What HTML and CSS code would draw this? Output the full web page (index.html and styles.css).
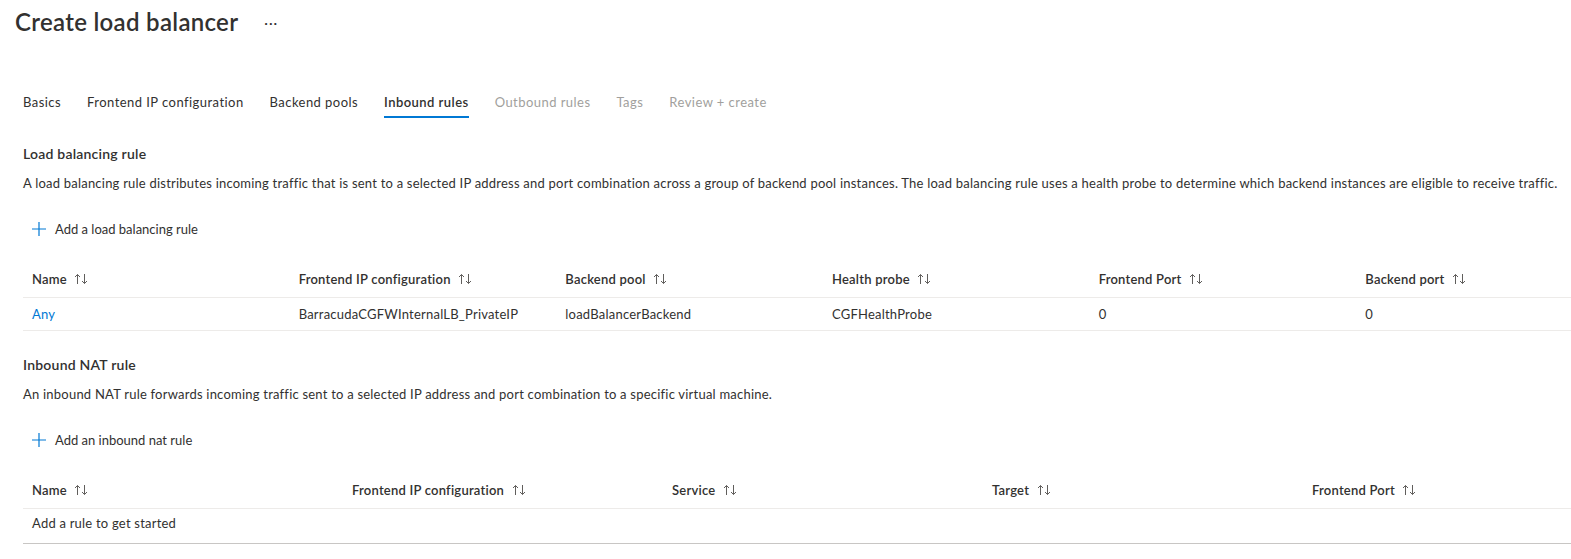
FILE: index.html
```html
<!DOCTYPE html>
<html lang="en">
<head>
  <meta charset="UTF-8">
  <title>Create load balancer</title>
  <link rel="stylesheet" href="styles.css">
</head>
<body>
  <div class="page">
    <div class="title-bar">
      <h1>Create load balancer</h1>
      <span class="more">&middot;&middot;&middot;</span>
    </div>

    <nav class="tabs">
      <a class="tab">Basics</a>
      <a class="tab">Frontend IP configuration</a>
      <a class="tab">Backend pools</a>
      <a class="tab active">Inbound rules</a>
      <a class="tab disabled">Outbound rules</a>
      <a class="tab disabled">Tags</a>
      <a class="tab disabled">Review + create</a>
    </nav>

    <section class="section first">
      <h2>Load balancing rule</h2>
      <p class="desc">A load balancing rule distributes incoming traffic that is sent to a selected IP address and port combination across a group of backend pool instances. The load balancing rule uses a health probe to determine which backend instances are eligible to receive traffic.</p>
      <button class="add">
        <svg width="16" height="16" viewBox="0 0 16 16"><path d="M8 1v14M1 8h14" stroke="#0078d4" stroke-width="1.2" fill="none"/></svg>
        Add a load balancing rule
      </button>
      <table class="grid six">
        <thead>
          <tr>
            <th>Name <svg class="sort" width="14" height="12" viewBox="0 0 14 12"><path d="M3.5 11V1.5M1 4l2.5-2.5L6 4M10.5 1v9.5M8 8l2.5 2.5L13 8" stroke="#605e5c" stroke-width="1" fill="none"/></svg></th>
            <th>Frontend IP configuration <svg class="sort" width="14" height="12" viewBox="0 0 14 12"><path d="M3.5 11V1.5M1 4l2.5-2.5L6 4M10.5 1v9.5M8 8l2.5 2.5L13 8" stroke="#605e5c" stroke-width="1" fill="none"/></svg></th>
            <th>Backend pool <svg class="sort" width="14" height="12" viewBox="0 0 14 12"><path d="M3.5 11V1.5M1 4l2.5-2.5L6 4M10.5 1v9.5M8 8l2.5 2.5L13 8" stroke="#605e5c" stroke-width="1" fill="none"/></svg></th>
            <th>Health probe <svg class="sort" width="14" height="12" viewBox="0 0 14 12"><path d="M3.5 11V1.5M1 4l2.5-2.5L6 4M10.5 1v9.5M8 8l2.5 2.5L13 8" stroke="#605e5c" stroke-width="1" fill="none"/></svg></th>
            <th>Frontend Port <svg class="sort" width="14" height="12" viewBox="0 0 14 12"><path d="M3.5 11V1.5M1 4l2.5-2.5L6 4M10.5 1v9.5M8 8l2.5 2.5L13 8" stroke="#605e5c" stroke-width="1" fill="none"/></svg></th>
            <th>Backend port <svg class="sort" width="14" height="12" viewBox="0 0 14 12"><path d="M3.5 11V1.5M1 4l2.5-2.5L6 4M10.5 1v9.5M8 8l2.5 2.5L13 8" stroke="#605e5c" stroke-width="1" fill="none"/></svg></th>
          </tr>
        </thead>
        <tbody>
          <tr>
            <td><a class="link">Any</a></td>
            <td>BarracudaCGFWInternalLB_PrivateIP</td>
            <td>loadBalancerBackend</td>
            <td>CGFHealthProbe</td>
            <td>0</td>
            <td>0</td>
          </tr>
        </tbody>
      </table>
    </section>

    <section class="section">
      <h2>Inbound NAT rule</h2>
      <p class="desc">An inbound NAT rule forwards incoming traffic sent to a selected IP address and port combination to a specific virtual machine.</p>
      <button class="add">
        <svg width="16" height="16" viewBox="0 0 16 16"><path d="M8 1v14M1 8h14" stroke="#0078d4" stroke-width="1.2" fill="none"/></svg>
        Add an inbound nat rule
      </button>
      <table class="grid five">
        <thead>
          <tr>
            <th>Name <svg class="sort" width="14" height="12" viewBox="0 0 14 12"><path d="M3.5 11V1.5M1 4l2.5-2.5L6 4M10.5 1v9.5M8 8l2.5 2.5L13 8" stroke="#605e5c" stroke-width="1" fill="none"/></svg></th>
            <th>Frontend IP configuration <svg class="sort" width="14" height="12" viewBox="0 0 14 12"><path d="M3.5 11V1.5M1 4l2.5-2.5L6 4M10.5 1v9.5M8 8l2.5 2.5L13 8" stroke="#605e5c" stroke-width="1" fill="none"/></svg></th>
            <th>Service <svg class="sort" width="14" height="12" viewBox="0 0 14 12"><path d="M3.5 11V1.5M1 4l2.5-2.5L6 4M10.5 1v9.5M8 8l2.5 2.5L13 8" stroke="#605e5c" stroke-width="1" fill="none"/></svg></th>
            <th>Target <svg class="sort" width="14" height="12" viewBox="0 0 14 12"><path d="M3.5 11V1.5M1 4l2.5-2.5L6 4M10.5 1v9.5M8 8l2.5 2.5L13 8" stroke="#605e5c" stroke-width="1" fill="none"/></svg></th>
            <th>Frontend Port <svg class="sort" width="14" height="12" viewBox="0 0 14 12"><path d="M3.5 11V1.5M1 4l2.5-2.5L6 4M10.5 1v9.5M8 8l2.5 2.5L13 8" stroke="#605e5c" stroke-width="1" fill="none"/></svg></th>
          </tr>
        </thead>
        <tbody>
          <tr class="empty">
            <td colspan="5">Add a rule to get started</td>
          </tr>
        </tbody>
      </table>
    </section>
  </div>
</body>
</html>
```

FILE: styles.css
```css
html, body { margin: 0; overflow: hidden; }
body {
  font-family: Lato, "Noto Sans", sans-serif;
  color: #323130;
  background: #fff;
  font-size: 13px;
  letter-spacing: 0.22px;
}
.page { width: 1640px; }

.title-bar { display: flex; align-items: center; padding: 6px 0 0 15px; height: 32px; }
h1 { margin: 0; font-size: 24px; font-weight: 600; line-height: 32px; letter-spacing: 0.3px; }
.more { margin-left: 26px; font-size: 14px; color: #323130; letter-spacing: 1px; }

.tabs { display: flex; gap: 26px; margin: 46px 0 0 23px; }
.tab { padding: 8px 0 4px; line-height: 20px; font-size: 13px; border-bottom: 2px solid transparent; letter-spacing: 0.45px; }
.tab.active { font-weight: 600; border-bottom-color: #0078d4; }
.tab.disabled { color: #a19f9d; }

.section { padding-left: 23px; }
h2 { margin: 24px 0 0; font-size: 14px; font-weight: 600; line-height: 20px; }
.first h2 { margin-top: 26px; }
.desc { margin: 10px 0 0; line-height: 18px; }

.add {
  display: flex; align-items: center; gap: 8px;
  height: 36px; margin-top: 19px; padding: 0 0 0 8px;
  border: none; background: none; font: inherit; color: #323130;
}

.grid { border-collapse: collapse; margin-top: 14px; table-layout: fixed; width: 1600px; }
.grid th {
  text-align: left; font-weight: 600; height: 36px; padding: 0 9px;
  border-bottom: 1px solid #edebe9;
}
.grid td { height: 32px; padding: 0 9px; border-bottom: 1px solid #edebe9; }
.sort { margin-left: 4px; vertical-align: -1px; }
.link { color: #0078d4; }
.grid .empty td { height: auto; line-height: 18px; padding: 5px 9px 11px; border-bottom-color: #c8c6c4; }
```
